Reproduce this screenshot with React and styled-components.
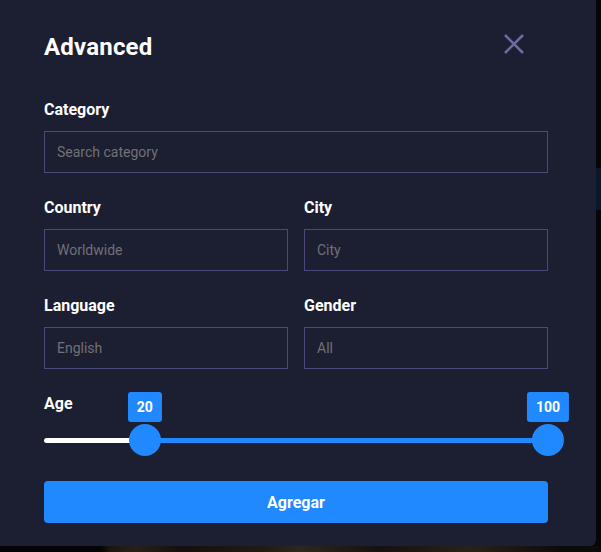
import styled, { createGlobalStyle } from "styled-components";

const GlobalStyle = createGlobalStyle`
    html, body {
        margin: 0;
        padding: 0;
        background: #050608;
        font-family: Roboto, "Liberation Sans", sans-serif;
    }
    * {
        box-sizing: border-box;
    }
`;

const ages = { min: 0, max: 100, low: 20, high: 100 };

const CloseIcon = () => (
    <svg width='20' height='20' viewBox='0 0 20 20' fill='none'>
        <path d='M1 1L19 19M19 1L1 19' stroke='#6b6c9f' strokeWidth='2.6' />
    </svg>
);

const Field = ({ label, placeholder }) => (
    <FieldGroup>
        <Label>{label}</Label>
        <Input placeholder={placeholder} />
    </FieldGroup>
);

const App = () => {
    const lowPct = ((ages.low - ages.min) / (ages.max - ages.min)) * 100;
    const highPct = ((ages.high - ages.min) / (ages.max - ages.min)) * 100;

    return (
        <Page>
            <GlobalStyle />
            <SideBand />
            <BottomStrip />
            <Modal>
                <Header>
                    <Title>Advanced</Title>
                    <CloseButton aria-label='close'>
                        <CloseIcon />
                    </CloseButton>
                </Header>

                <Form>
                    <Field label='Category' placeholder='Search category' />
                    <Row>
                        <Field label='Country' placeholder='Worldwide' />
                        <Field label='City' placeholder='City' />
                    </Row>
                    <Row>
                        <Field label='Language' placeholder='English' />
                        <Field label='Gender' placeholder='All' />
                    </Row>

                    <FieldGroup>
                        <Label>Age</Label>
                        <Slider>
                            <Track />
                            <Range style={{ left: `${lowPct}%`, width: `${highPct - lowPct}%` }} />
                            {[ages.low, ages.high].map((value, i) => {
                                const pct = i === 0 ? lowPct : highPct;
                                return (
                                    <Handle key={i} style={{ left: `${pct}%` }}>
                                        <Bubble>{value}</Bubble>
                                        <Thumb />
                                    </Handle>
                                );
                            })}
                        </Slider>
                    </FieldGroup>

                    <Submit>Agregar</Submit>
                </Form>
            </Modal>
        </Page>
    );
};

const Page = styled.div`
    position: relative;
    width: 601px;
    height: 552px;
    overflow: hidden;
    background: #050608;
`;

const SideBand = styled.div`
    position: absolute;
    right: 0;
    top: 168px;
    width: 6px;
    height: 42px;
    background: #0a192a;
`;

const BottomStrip = styled.div`
    position: absolute;
    left: 0;
    bottom: 0;
    width: 601px;
    height: 6px;
    background: linear-gradient(
        90deg,
        #040404 0,
        #040404 100px,
        #1c1412 110px,
        #2a201a 135px,
        #14100e 180px,
        #221915 260px,
        #2e2620 300px,
        #15110f 380px,
        #2a211b 470px,
        #0d0b0a 560px
    );
`;

const Modal = styled.section`
    position: relative;
    width: 596px;
    height: 546px;
    background: #1c1e31;
    border-radius: 0 0 6px 0;
    padding: 33px 48px 23px 44px;
    color: #fff;
`;

const Header = styled.header`
    display: flex;
    align-items: flex-start;
    justify-content: space-between;
    height: 28px;
    margin-bottom: 39px;
`;

const Title = styled.h2`
    margin: 0;
    font-size: 24px;
    line-height: 28px;
    font-weight: 700;
    letter-spacing: 0.2px;
`;

const CloseButton = styled.button`
    display: grid;
    place-items: center;
    width: 20px;
    height: 20px;
    margin: 1px 24px 0 0;
    padding: 0;
    border: none;
    background: transparent;
    cursor: pointer;
`;

const Form = styled.div`
    display: flex;
    flex-direction: column;
    gap: 25px;
    width: 504px;
`;

const Row = styled.div`
    display: grid;
    grid-template-columns: 1fr 1fr;
    gap: 16px;
`;

const FieldGroup = styled.div`
    display: flex;
    flex-direction: column;
    gap: 11px;
`;

const Label = styled.label`
    font-size: 16px;
    line-height: 20px;
    font-weight: 700;
    color: #fff;
`;

const Input = styled.input`
    width: 100%;
    height: 42px;
    padding: 0 12px;
    border: 1px solid #4a4979;
    border-radius: 0;
    background: transparent;
    color: #fff;
    font-family: Roboto, "Liberation Sans", sans-serif;
    font-size: 14px;
    outline: none;

    &::placeholder {
        color: #717177;
    }
`;

const Slider = styled.div`
    position: relative;
    height: 42px;
    margin-top: -11px;
`;

const Track = styled.div`
    position: absolute;
    left: 0;
    right: 0;
    top: 24px;
    height: 5px;
    border-radius: 3px;
    background: #fff;
`;

const Range = styled.div`
    position: absolute;
    top: 24px;
    height: 5px;
    background: #2189ff;
`;

const Handle = styled.div`
    position: absolute;
    top: -22px;
    display: flex;
    flex-direction: column;
    align-items: center;
    gap: 2px;
    transform: translateX(-50%);
`;

const Bubble = styled.span`
    display: grid;
    place-items: center;
    height: 30px;
    min-width: 32px;
    padding: 0 9px;
    border-radius: 3px;
    background: #2189ff;
    color: #fff;
    font-size: 14px;
    font-weight: 700;
`;

const Thumb = styled.span`
    width: 32px;
    height: 32px;
    border-radius: 50%;
    background: #2189ff;
`;

const Submit = styled.button`
    height: 42px;
    border: none;
    border-radius: 4px;
    background: #2189ff;
    color: #fff;
    font-family: Roboto, "Liberation Sans", sans-serif;
    font-size: 16px;
    font-weight: 700;
    cursor: pointer;
`;

export default App;
